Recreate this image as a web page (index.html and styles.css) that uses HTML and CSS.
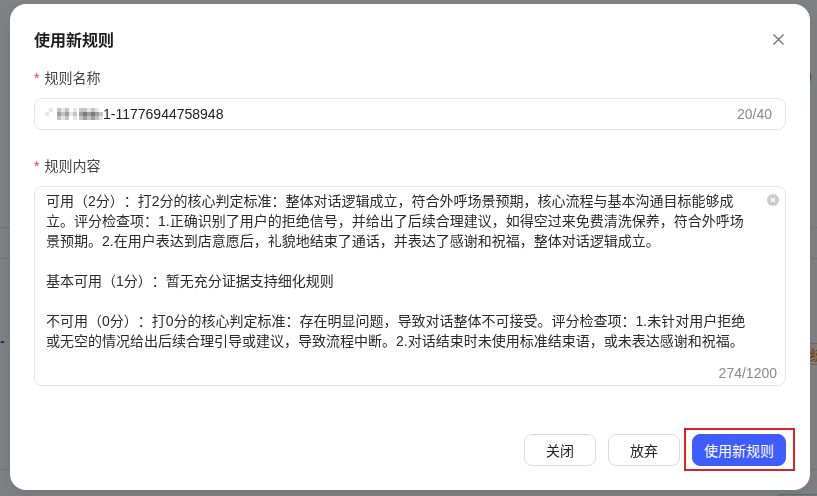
FILE: index.html
```html
<!DOCTYPE html>
<html lang="zh-CN">
<head>
    <meta charset="UTF-8">
    <meta name="viewport" content="width=device-width, initial-scale=1.0">
    <title>使用新规则</title>
    <link rel="stylesheet" href="styles.css">
</head>
<body>
    <div class="page">
        <div class="page-top">
            <div class="stat"><span class="stat-num">0</span><span class="stat-label">么</span></div>
        </div>
        <table class="records">
            <tbody>
                <tr class="row-a"><td class="c-link"></td><td></td><td></td><td></td><td></td><td></td></tr>
                <tr class="row-b"><td class="c-link">-</td><td></td><td></td><td></td><td></td><td class="c-end"><span class="warn">系统</span></td></tr>
                <tr class="row-c"><td class="c-link"></td><td></td><td></td><td></td><td></td><td class="c-end"><span class="tag">已校验</span></td></tr>
                <tr class="row-d"><td class="c-link">-</td><td class="c-time">2025-04-28 11:02:03</td><td class="c-num">1</td><td class="c-num">0</td><td>协 - 基本可用</td><td class="c-end"><span class="tag">已校验</span></td></tr>
            </tbody>
        </table>
    </div>

    <div class="mask">
        <div class="modal">
            <div class="modal-header">
                <div class="modal-title">使用新规则</div>
                <button class="modal-close" aria-label="关闭">
                    <svg width="11" height="11" viewBox="0 0 11 11"><path d="M0.5 0.5 L10.5 10.5 M10.5 0.5 L0.5 10.5" stroke="#6b6b6b" stroke-width="1.2" fill="none"/></svg>
                </button>
            </div>

            <div class="form-item">
                <label class="form-label"><span class="req">*</span>规则名称</label>
                <div class="input">
                    <span class="input-value">
                        <span class="mosaic m1">
                            <i class="g0"></i><i class="g1"></i><i class="g0"></i><i class="g2"></i><i class="g1"></i><i class="g2"></i><i class="g0"></i><i class="g1"></i>
                            <i class="g1"></i><i class="g0"></i><i class="g0"></i><i class="g3"></i><i class="g2"></i><i class="g3"></i><i class="g1"></i><i class="g2"></i>
                            <i class="g0"></i><i class="g0"></i><i class="g0"></i><i class="g2"></i><i class="g1"></i><i class="g2"></i><i class="g0"></i><i class="g1"></i>
                        </span>
                        <span class="mosaic m2">
                            <i class="g2"></i><i class="g2"></i><i class="g1"></i><i class="g2"></i><i class="g1"></i><i class="g0"></i>
                            <i class="g3"></i><i class="g4"></i><i class="g3"></i><i class="g4"></i><i class="g3"></i><i class="g2"></i>
                            <i class="g2"></i><i class="g3"></i><i class="g2"></i><i class="g3"></i><i class="g2"></i><i class="g1"></i>
                        </span>1-11776944758948
                    </span>
                    <span class="count">20/40</span>
                </div>
            </div>

            <div class="form-item form-item-area">
                <label class="form-label"><span class="req">*</span>规则内容</label>
                <div class="textarea">
                    <div class="textarea-text">
                        <p>可用（2分）：打2分的核心判定标准：整体对话逻辑成立，符合外呼场景预期，核心流程与基本沟通目标能够成</p>
                        <p>立。评分检查项：1.正确识别了用户的拒绝信号，并给出了后续合理建议，如得空过来免费清洗保养，符合外呼场</p>
                        <p>景预期。2.在用户表达到店意愿后，礼貌地结束了通话，并表达了感谢和祝福，整体对话逻辑成立。</p>
                        <p>&nbsp;</p>
                        <p>基本可用（1分）：暂无充分证据支持细化规则</p>
                        <p>&nbsp;</p>
                        <p>不可用（0分）：打0分的核心判定标准：存在明显问题，导致对话整体不可接受。评分检查项：1.未针对用户拒绝</p>
                        <p>或无空的情况给出后续合理引导或建议，导致流程中断。2.对话结束时未使用标准结束语，或未表达感谢和祝福。</p>
                    </div>
                    <span class="clear">
                        <svg width="12" height="12" viewBox="0 0 12 12"><circle cx="6" cy="6" r="6" fill="#cbcbcd"/><path d="M4 4 L8 8 M8 4 L4 8" stroke="#fff" stroke-width="1.3"/></svg>
                    </span>
                    <span class="area-count">274/1200</span>
                </div>
            </div>

            <div class="modal-footer">
                <button class="btn">关闭</button>
                <button class="btn">放弃</button>
                <div class="btn-mark">
                    <button class="btn btn-primary">使用新规则</button>
                    <span class="mark"></span>
                </div>
            </div>
        </div>
    </div>
</body>
</html>
```

FILE: styles.css
```css
body {
    margin: 0;
    background-color: #fff;
    color: #333;
    font-family: "Liberation Sans", "Noto Sans CJK SC", sans-serif;
    font-size: 14px;
    text-spacing-trim: space-all;
}
.page {
    width: 817px;
    height: 496px;
    overflow: hidden;
}
.page-top {
    height: 227px;
    display: flex;
    justify-content: flex-end;
}
.stat {
    display: flex;
    flex-direction: column;
    width: 20px;
    padding-top: 62px;
    font-size: 26px;
    line-height: 30px;
    color: #222;
}
.stat-label {
    font-size: 14px;
    line-height: 20px;
    color: #888;
}
.records {
    width: 100%;
    border-collapse: collapse;
}
.records td {
    border-top: 1px solid #e6e6e6;
    padding: 0 8px;
    vertical-align: middle;
    white-space: nowrap;
}
.row-a td { height: 30px; }
.row-b td { height: 126px; }
.row-c td { height: 69px; }
.row-d td { height: 70px; padding-top: 14px; }
.c-link {
    width: 1px;
    padding: 0 !important;
    color: #2f54eb;
    font-weight: bold;
    line-height: 16px;
}
.row-b .c-link,
.row-d .c-link {
    vertical-align: top;
}
.row-b .c-link { padding-top: 74px !important; }
.row-d .c-link { padding-top: 14px !important; }
.row-b .c-end {
    vertical-align: top;
    padding-top: 84px;
}
.c-time {
    width: 220px;
    padding-left: 70px !important;
}
.c-num {
    width: 140px;
}
.c-end {
    text-align: right;
}
.warn {
    display: inline-block;
    margin-right: -20px;
    padding: 0 4px;
    border: 1px solid #f7c99b;
    background-color: #fff7ee;
    color: #e87b1a;
}
.tag {
    display: inline-block;
    margin-right: -24px;
    padding: 0 6px;
    border: 1px solid #b7e3c4;
    background-color: #eefaf1;
    color: #2f9e55;
    border-radius: 4px;
}

.mask {
    position: fixed;
    inset: 0;
    background-color: rgba(0, 3, 10, 0.5);
}
.modal {
    box-sizing: border-box;
    width: 800px;
    height: 486px;
    margin: 4px 0 0 10px;
    padding: 23px 24px 24px;
    display: flex;
    flex-direction: column;
    background-color: #fff;
    border-radius: 16px;
    box-shadow: 0 6px 16px rgba(0, 0, 0, 0.08);
}
.modal-header {
    display: flex;
    justify-content: space-between;
    align-items: center;
    height: 24px;
}
.modal-title {
    font-size: 16px;
    font-weight: bold;
    color: #1d1d1f;
}
.modal-close {
    width: 16px;
    height: 16px;
    padding: 0;
    border: none;
    background: none;
    display: flex;
    align-items: center;
    justify-content: center;
    cursor: pointer;
}
.form-item {
    margin-top: 16px;
}
.form-item-area {
    margin-top: 25px;
}
.form-label {
    display: block;
    line-height: 22px;
    margin-bottom: 9px;
    color: #444;
}
.req {
    color: #f5313a;
    margin-right: 5px;
}
.input {
    box-sizing: border-box;
    height: 32px;
    display: flex;
    align-items: center;
    justify-content: space-between;
    padding: 0 13px 0 10px;
    border: 1px solid #e4e4e7;
    border-radius: 8px;
    color: #222;
}
.input-value {
    display: flex;
    align-items: center;
}
.mosaic {
    display: grid;
    grid-template-rows: repeat(3, 4px);
}
.m1 {
    grid-template-columns: repeat(8, 4px);
    margin-right: 2px;
}
.m2 {
    grid-template-columns: repeat(6, 4px);
}
.mosaic .g0 { background-color: #fff; }
.mosaic .g1 { background-color: #e6e6e6; }
.mosaic .g2 { background-color: #c4c4c4; }
.mosaic .g3 { background-color: #9e9e9e; }
.mosaic .g4 { background-color: #7c7c7c; }
.count {
    color: #8a8a8e;
}
.textarea {
    position: relative;
    box-sizing: border-box;
    height: 200px;
    padding: 4px 11px 0;
    border: 1px solid #e4e4e7;
    border-radius: 8px;
    color: #2b2b2b;
}
.textarea-text p {
    margin: 0;
    line-height: 20px;
    white-space: nowrap;
}
.clear {
    position: absolute;
    top: 7px;
    right: 6px;
    display: flex;
}
.area-count {
    position: absolute;
    right: 8px;
    bottom: 4px;
    color: #8a8a8e;
}
.modal-footer {
    margin-top: auto;
    display: flex;
    justify-content: flex-end;
    gap: 12px;
}
.btn {
    box-sizing: border-box;
    height: 32px;
    min-width: 72px;
    padding: 0 11px;
    border: 1px solid #dcdce0;
    border-radius: 8px;
    background-color: #fff;
    color: #222;
    font-family: inherit;
    font-size: 14px;
    cursor: pointer;
}
.btn-primary {
    border-color: #3f5cfd;
    background-color: #3f5cfd;
    color: #fff;
}
.btn-mark {
    position: relative;
    display: flex;
}
.mark {
    position: absolute;
    top: -6px;
    left: -8px;
    right: -9px;
    bottom: -5px;
    border: 2px solid #d9232b;
}
```
